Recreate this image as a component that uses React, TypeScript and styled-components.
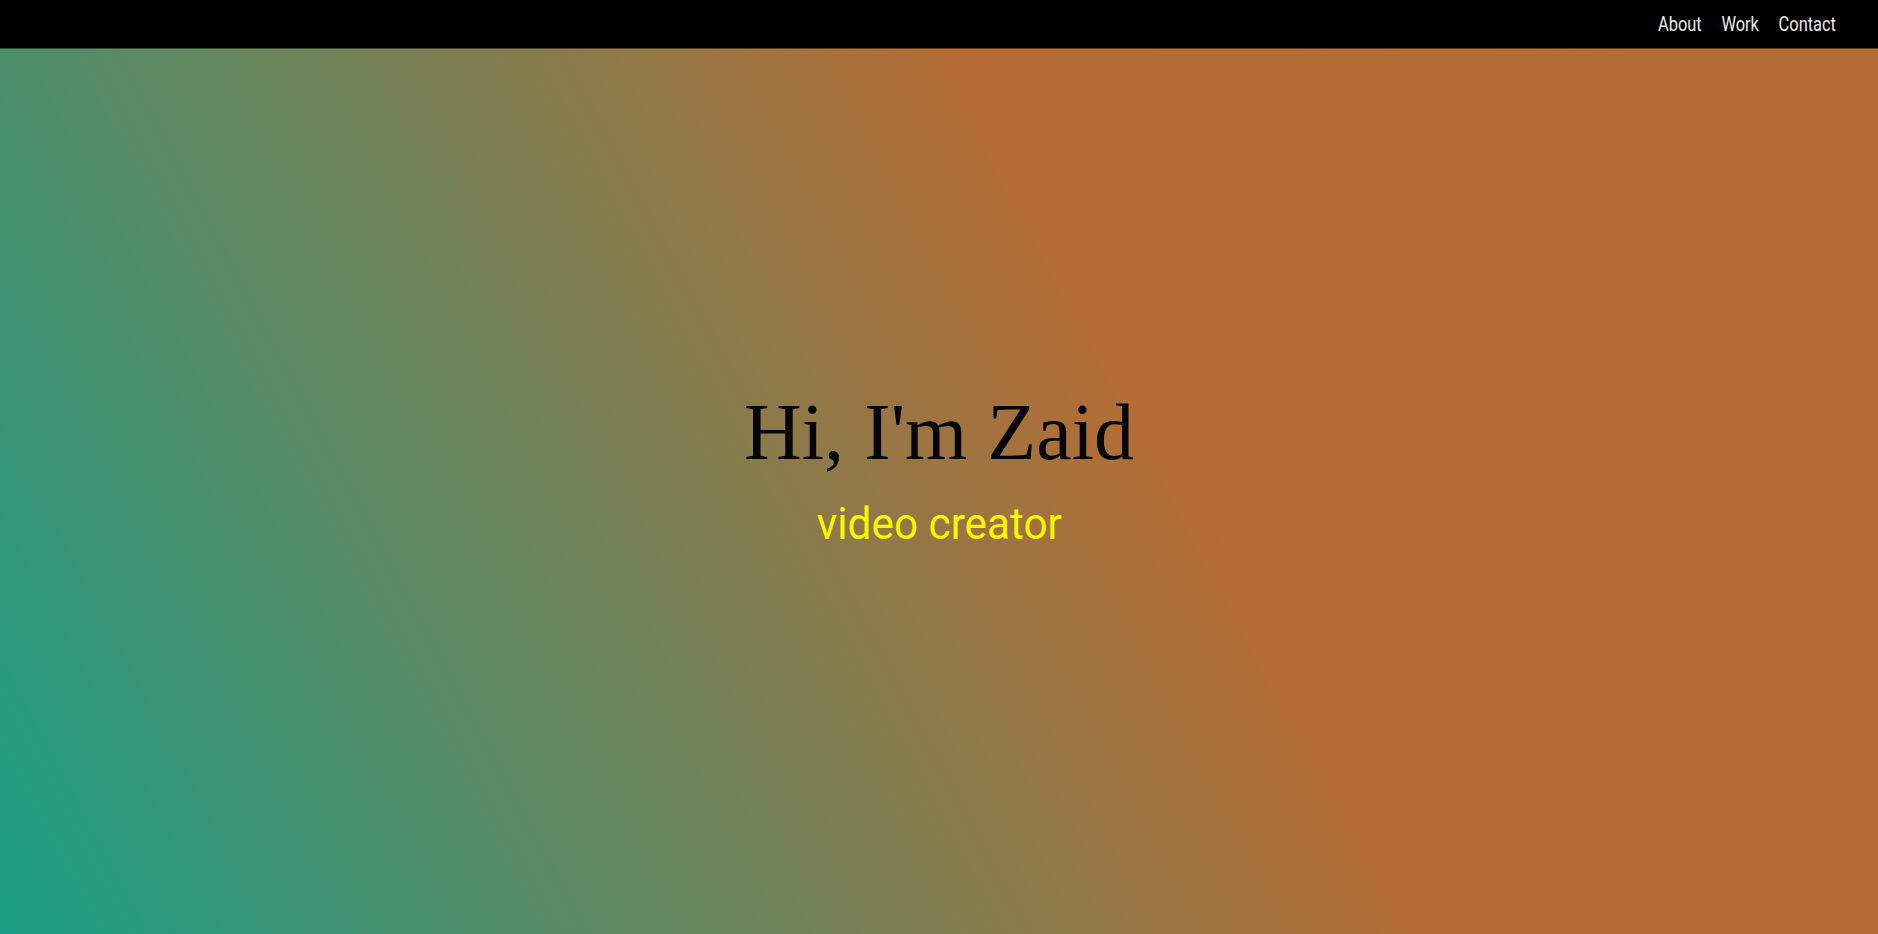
import React from "react";
import styled, { createGlobalStyle } from "styled-components";

const GlobalStyle = createGlobalStyle`
  html, body {
    margin: 0;
    padding: 0;
    height: 100%;
    overflow: hidden;
  }
  body {
    font-family: "Liberation Serif", "Times New Roman", serif;
    background: #000;
  }
  #root {
    height: 100%;
  }
`;

const Page = styled.div`
  display: flex;
  flex-direction: column;
  height: 100vh;
`;

const NavBar = styled.nav`
  position: relative;
  z-index: 1;
  flex: 0 0 48px;
  display: flex;
  align-items: center;
  justify-content: flex-end;
  padding: 0 42px 0 0;
  background: #000;
  box-shadow: 0 1px 0 rgba(0, 0, 0, 0.45);
`;

const NavList = styled.div`
  display: flex;
  align-items: center;
  gap: 24px;
  transform: scaleX(0.82);
  transform-origin: right center;
`;

const NavLink = styled.a`
  font-family: "Roboto", "Liberation Sans", sans-serif;
  font-size: 20px;
  line-height: 1;
  color: #ececec;
  text-decoration: none;
  cursor: pointer;
`;

const Hero = styled.main`
  flex: 1;
  display: flex;
  flex-direction: column;
  align-items: center;
  justify-content: center;
  padding-bottom: 42px;
  background: linear-gradient(
    62deg,
    #1a9f86 0%,
    #b66c34 61%,
    #b36a35 100%
  );
`;

const Title = styled.h1`
  margin: 0;
  font-family: "Liberation Serif", "Times New Roman", serif;
  font-weight: 400;
  font-size: 80px;
  line-height: 80px;
  color: #050505;
`;

const Subtitle = styled.p`
  margin: 28px 0 0;
  font-family: "Roboto", "Liberation Sans", sans-serif;
  font-size: 45px;
  line-height: 48px;
  color: #fbf500;
  transform: scaleX(0.94);
`;

export default function App() {
  return (
    <>
      <GlobalStyle />
      <Page>
        <NavBar>
          <NavList>
            <NavLink>About</NavLink>
            <NavLink>Work</NavLink>
            <NavLink>Contact</NavLink>
          </NavList>
        </NavBar>
        <Hero>
          <Title>Hi, I'm Zaid</Title>
          <Subtitle>video creator</Subtitle>
        </Hero>
      </Page>
    </>
  );
}
